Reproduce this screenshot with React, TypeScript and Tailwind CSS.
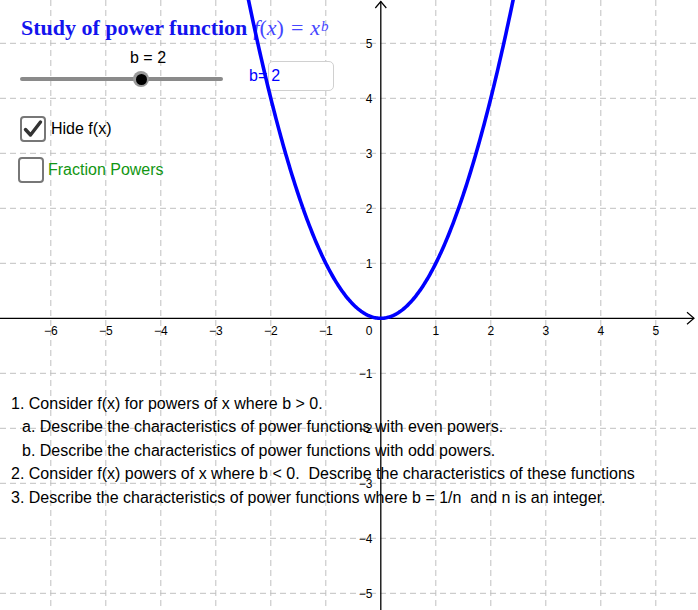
import React from "react";

const OX = 380.8;
const OY = 318.3;
const U = 55;

function curvePath(): string {
  const pts: string[] = [];
  for (let px = 240; px <= 520; px += 1) {
    const x = (px - OX) / U;
    const y = x * x;
    const py = OY - y * U;
    pts.push(`${pts.length === 0 ? "M" : "L"}${px.toFixed(1)},${py.toFixed(2)}`);
  }
  return pts.join(" ");
}

function Grid() {
  const vs: number[] = [];
  for (let k = -6; k <= 5; k++) if (k !== 0) vs.push(OX + k * U);
  const hs: number[] = [];
  for (let k = -5; k <= 5; k++) if (k !== 0) hs.push(OY - k * U);
  return (
    <svg className="absolute inset-0" width={698} height={610}>
      {vs.map((x) => (
        <line key={"v" + x} x1={x} y1={0} x2={x} y2={610} stroke="#c0c0c0" strokeWidth={1} strokeDasharray="6 4" />
      ))}
      {hs.map((y) => (
        <line key={"h" + y} x1={0} y1={y} x2={698} y2={y} stroke="#c0c0c0" strokeWidth={1} strokeDasharray="6 4" />
      ))}
    </svg>
  );
}

function Axes() {
  const xl: number[] = [-6, -5, -4, -3, -2, -1, 1, 2, 3, 4, 5];
  const yl: number[] = [5, 4, 3, 2, 1, -1, -2, -3, -4, -5];
  const lab = (n: number) => (n < 0 ? "\u2212" + Math.abs(n) : String(n));
  return (
    <svg className="absolute inset-0 pointer-events-none" width={698} height={610}>
      <line x1={0} y1={OY} x2={694} y2={OY} stroke="#000" strokeWidth={1.3} />
      <polyline points={`687,312.3 694,${OY} 687,324.3`} fill="none" stroke="#000" strokeWidth={1.2} />
      <line x1={OX} y1={610} x2={OX} y2={1.5} stroke="#000" strokeWidth={1.3} />
      <polyline points={`${OX - 5.5},8 ${OX},1.5 ${OX + 5.5},8`} fill="none" stroke="#000" strokeWidth={1.2} />
      <g fontFamily="'Liberation Sans', Arial, sans-serif" fontSize={12} fill="#000">
        {xl.map((n) => (
          <text key={"x" + n} x={OX + n * U} y={OY + 16.5} textAnchor="middle">
            {lab(n)}
          </text>
        ))}
        <text x={372.5} y={OY + 16.5} textAnchor="end">0</text>
        {yl.map((n) => (
          <text key={"y" + n} x={372.5} y={OY - n * U + 4.5} textAnchor="end">
            {lab(n)}
          </text>
        ))}
      </g>
      <path d={curvePath()} fill="none" stroke="#0000ff" strokeWidth={3.6} strokeLinejoin="round" />
    </svg>
  );
}

function CheckBox({ checked }: { checked: boolean }) {
  return (
    <div className="w-[26px] h-[26px] rounded-[4px] border-2 border-[#777] bg-white flex items-center justify-center">
      {checked && (
        <svg width="20" height="20" viewBox="0 0 20 20">
          <path d="M2.5 10.5 L7.5 16 L17.5 3" fill="none" stroke="#333" strokeWidth={3.4} strokeLinecap="round" strokeLinejoin="round" />
        </svg>
      )}
    </div>
  );
}

export default function App() {
  const sans = { fontFamily: "'Liberation Sans', Arial, sans-serif" };
  const serif = { fontFamily: "'Liberation Serif', 'Times New Roman', serif" };
  return (
    <div className="relative w-[698px] h-[610px] bg-white overflow-hidden" style={sans}>
      <Grid />

      {/* Control panel */}
      <div className="absolute left-[18px] top-[11px] flex flex-col items-start">
        {/* Title */}
        <div className="ml-[3px] h-[37px] flex items-baseline whitespace-nowrap" style={serif}>
          <span className="text-[22px] font-bold text-[#1414ee]">Study of power function</span>
          <span className="ml-[6px] text-[22px] text-[#4646ff]">
            <i>f</i>(<i>x</i>)<span className="mx-[7px]">=</span><i>x</i>
            <sup className="text-[15px] relative top-[-4px] ml-[1px]"><i>b</i></sup>
          </span>
        </div>

        {/* Slider row */}
        <div className="ml-[2px] flex items-start gap-[26px]">
          <div className="w-[203px] flex flex-col">
            <div className="pl-[110px] text-[16px] leading-[20px] text-black">b = 2</div>
            <div className="relative mt-[9px] h-[4px] rounded-full bg-[#8a8a8a]">
              <div className="absolute left-[113px] top-[-6px] w-[16px] h-[16px] rounded-full bg-[#9a9a9a] flex items-center justify-center">
                <div className="w-[11px] h-[11px] rounded-full bg-black" />
              </div>
            </div>
          </div>
          <div className="mt-[13px] flex items-center">
            <span className="text-[16px] text-[#0000ff]">b=</span>
            <div className="ml-[1px] w-[66px] h-[30px] rounded-[5px] border border-[#d0d0d0] bg-white flex items-center pl-[2px] text-[16px] text-[#0000ff]">
              2
            </div>
          </div>
        </div>

        {/* Checkboxes */}
        <div className="ml-[2px] mt-[25px] flex items-center gap-[5px]">
          <CheckBox checked />
          <span className="text-[16px] text-black">Hide f(x)</span>
        </div>
        <div className="mt-[15px] flex items-center gap-[4px]">
          <CheckBox checked={false} />
          <span className="text-[16px] text-[#129612]">Fraction Powers</span>
        </div>
      </div>

      {/* Instructions */}
      <div className="absolute left-[11px] top-[392px] text-[16px] leading-[23.4px] text-black whitespace-nowrap">
        <div>1. Consider f(x) for powers of x where b &gt; 0.</div>
        <div className="pl-[11px]">a. Describe the characteristics of power functions with even powers.</div>
        <div className="pl-[11px]">b. Describe the characteristics of power functions with odd powers.</div>
        <div>2. Consider f(x) powers of x where b &lt; 0.&nbsp; Describe the characteristics of these functions</div>
        <div>3. Describe the characteristics of power functions where b = 1/n&nbsp; and n is an integer.</div>
      </div>

      <Axes />
    </div>
  );
}
